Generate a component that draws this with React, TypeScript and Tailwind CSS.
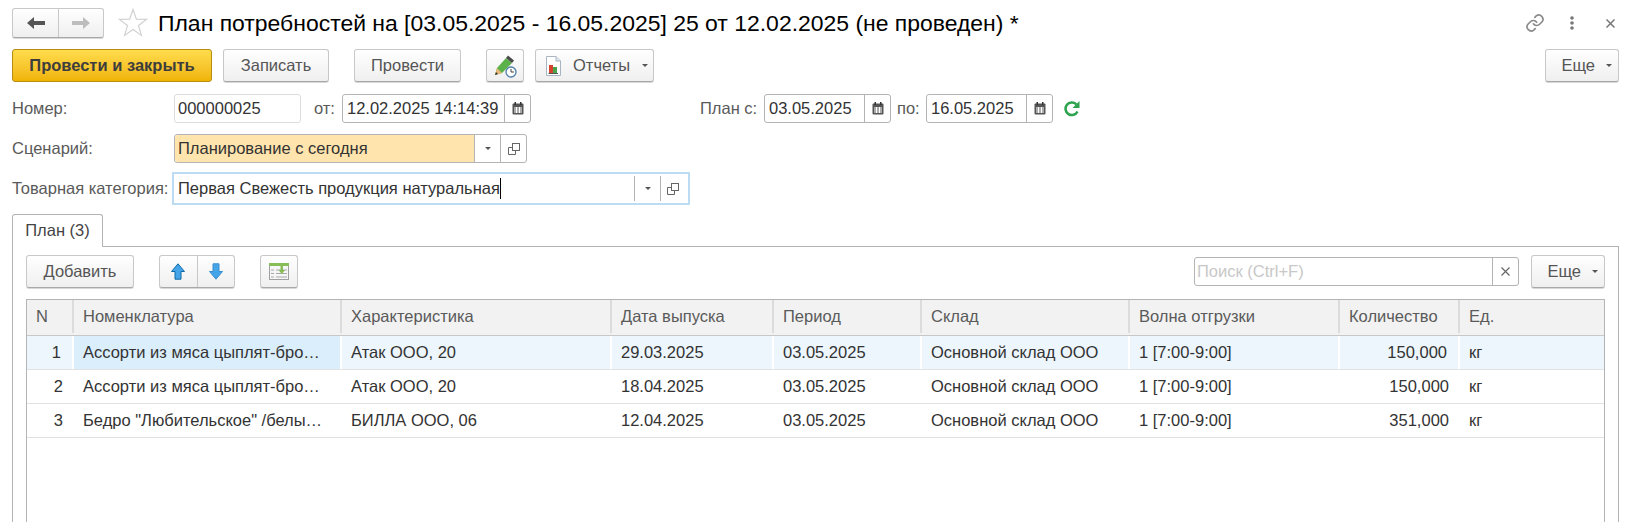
import type { ReactNode } from 'react';

const columns = 'grid grid-cols-[47px_268px_270px_162px_148px_208px_210px_120px_1fr]';

const headers = ['N', 'Номенклатура', 'Характеристика', 'Дата выпуска', 'Период', 'Склад', 'Волна отгрузки', 'Количество', 'Ед.'];

const rows = [
  ['1', 'Ассорти из мяса цыплят-бро…', 'Атак ООО, 20', '29.03.2025', '03.05.2025', 'Основной склад ООО', '1 [7:00-9:00]', '150,000', 'кг'],
  ['2', 'Ассорти из мяса цыплят-бро…', 'Атак ООО, 20', '18.04.2025', '03.05.2025', 'Основной склад ООО', '1 [7:00-9:00]', '150,000', 'кг'],
  ['3', 'Бедро "Любительское" /белы…', 'БИЛЛА ООО, 06', '12.04.2025', '03.05.2025', 'Основной склад ООО', '1 [7:00-9:00]', '351,000', 'кг'],
];

function Caret() {
  return <span className="inline-block h-0 w-0 border-x-[3px] border-t-[3px] border-x-transparent border-t-[#555]" />;
}

function Btn({ className, children }: { className: string; children: ReactNode }) {
  return (
    <div className={`flex h-[33px] shrink-0 items-center justify-center rounded-[3px] border border-[#c8c8c8] border-b-[#a8a8a8] bg-linear-to-b from-white to-[#efefef] text-[#555] shadow-[0_1px_0_#d8d8d8] ${className}`}>
      {children}
    </div>
  );
}

function MoreBtn({ className }: { className: string }) {
  return (
    <Btn className={`w-[74px] justify-end! gap-[11px] pr-[6px] ${className}`}>
      <span>Еще</span>
      <Caret />
    </Btn>
  );
}

function CalendarIcon() {
  return (
    <svg width="12" height="13" viewBox="0 0 12 13">
      <rect x="0.5" y="1.5" width="11" height="11" rx="1" fill="#555" />
      <rect x="2.5" y="0" width="1.5" height="3" fill="#333" />
      <rect x="8" y="0" width="1.5" height="3" fill="#333" />
      <rect x="2" y="5" width="8" height="6" fill="#fff" />
      <path d="M2 6h2M5 6h2M8 6h2M2 8h2M5 8h2M8 8h2M2 10h2M5 10h2M8 10h2" stroke="#555" strokeWidth="1" />
    </svg>
  );
}

function OpenIcon() {
  return (
    <svg width="12" height="12" viewBox="0 0 12 12" fill="none" stroke="#666">
      <rect x="4.5" y="0.5" width="7" height="7" fill="#fff" />
      <path d="M4.5 4.5H0.5V11.5H7.5V7.5" />
    </svg>
  );
}

function DateField({ value, width, className = '' }: { value: string; width: string; className?: string }) {
  return (
    <div className={`flex h-[29px] items-center rounded-[3px] border border-[#b4b4b4] bg-white text-[#333] ${width} ${className}`}>
      <span className="flex-1 pl-[4px]">{value}</span>
      <span className="flex h-full w-[26px] items-center justify-center border-l border-[#b4b4b4]">
        <CalendarIcon />
      </span>
    </div>
  );
}

function Star() {
  return (
    <svg width="30" height="30" viewBox="0 0 30 30" className="ml-[14px] shrink-0">
      <path d="M15 1.5l3.4 9.6 10.2.3-8.1 6.2 2.9 9.8L15 21.6l-8.4 5.8 2.9-9.8-8.1-6.2 10.2-.3z" fill="#fff" stroke="#d0d0d0" strokeWidth="1.2" />
    </svg>
  );
}

function NavArrow({ color, flip }: { color: string; flip?: boolean }) {
  return (
    <svg width="18" height="14" viewBox="0 0 18 14" className={flip ? '-scale-x-100' : ''}>
      <path d="M0 7l7-6v4h11v4H7v4z" fill={color} />
    </svg>
  );
}

function PenIcon() {
  return (
    <svg width="24" height="24" viewBox="0 0 24 24">
      <path d="M2 21l2-7L13 4l6 5-10 10z" fill="#5cb24a" />
      <path d="M13 4l2-2.500 6 5-2 2.500z" fill="#4a4a4a" />
      <path d="M2 21l2-7 5 5z" fill="#e8b878" />
      <path d="M2 21l1-3 2 2z" fill="#333" />
      <circle cx="18" cy="18" r="5" fill="#fff" stroke="#4d7ea8" strokeWidth="1.300" />
      <path d="M18 15v3h3" fill="none" stroke="#444" strokeWidth="1" />
    </svg>
  );
}

function ReportIcon() {
  return (
    <svg width="15" height="20" viewBox="0 0 15 20">
      <path d="M0.500 0.500H10L14.500 5V19.500H0.500z" fill="#fff" stroke="#aab4c0" />
      <path d="M10 0.500V5H14.500" fill="#dfe5ec" stroke="#aab4c0" />
      <rect x="3" y="9" width="4" height="8" fill="#d8432f" />
      <rect x="7" y="11" width="4" height="6" fill="#4aa34a" />
      <path d="M2.500 17.500H12" stroke="#555" strokeWidth="1" />
    </svg>
  );
}

function BlueArrow({ down }: { down?: boolean }) {
  return (
    <svg width="14" height="17" viewBox="0 0 14 17" className={down ? 'rotate-180' : ''}>
      <path d="M7 0.800L13.500 8.500H10V16.200H4V8.500H0.500z" fill="#45a5e8" stroke={down ? '#3b8fd0' : '#0f6aa8'} strokeWidth="1" />
    </svg>
  );
}

function FillIcon() {
  return (
    <svg width="20" height="17" viewBox="0 0 20 17">
      <rect x="0.500" y="0.500" width="19" height="16" fill="#f6f6f6" stroke="#a0a0a0" />
      <rect x="0" y="0" width="20" height="3" fill="#86bd56" />
      <path d="M2 7h3M2 10.500h3M2 14h3M7 7h11M7 10.500h11M7 14h11" stroke="#a8a8a8" strokeWidth="1" />
      <path d="M11.500 3h2.500v4h2l-3.200 4-3.300-4h2z" fill="#86bd56" />
    </svg>
  );
}

function GreenRefresh() {
  return (
    <svg width="18" height="18" viewBox="0 0 18 18" className="ml-[10px]" fill="none">
      <path d="M14.500 11.500A6.300 6.300 0 1 1 13.300 4.300" stroke="#2ea44f" strokeWidth="2.600" />
      <path d="M16.500 1v7h-7z" fill="#2ea44f" />
    </svg>
  );
}

function LinkIcon() {
  return (
    <svg width="20" height="20" viewBox="0 0 24 24" fill="none" stroke="#8a8a8a" strokeWidth="2" strokeLinecap="round" strokeLinejoin="round">
      <path d="M10 13a5 5 0 0 0 7.500.500l3-3a5 5 0 0 0-7-7l-1.700 1.700" />
      <path d="M14 11a5 5 0 0 0-7.500-.500l-3 3a5 5 0 0 0 7 7l1.700-1.700" />
    </svg>
  );
}

export default function App() {
  return (
    <div className="flex h-[522px] w-[1644px] flex-col overflow-hidden bg-white pr-[25px] pl-3 font-['Liberation_Sans',Arial,sans-serif] text-[16.5px] leading-none">
      {/* заголовок */}
      <div className="mt-2 flex h-[30px] items-center">
        <div className="flex h-[30px] w-[92px] shrink-0 items-center rounded-[3px] border border-[#c8c8c8] border-b-[#a8a8a8] bg-linear-to-b from-white to-[#efefef] shadow-[0_1px_0_#d8d8d8]">
          <span className="flex h-full w-[46px] items-center justify-center border-r border-[#c8c8c8]">
            <NavArrow color="#555" />
          </span>
          <span className="flex h-full flex-1 items-center justify-center">
            <NavArrow color="#bdbdbd" flip />
          </span>
        </div>
        <Star />
        <h1 className="ml-[10px] text-[22.95px] font-normal whitespace-nowrap text-black">
          План потребностей на [03.05.2025 - 16.05.2025] 25 от 12.02.2025 (не проведен) *
        </h1>
        <div className="ml-auto flex items-center">
          <LinkIcon />
          <svg width="4" height="14" viewBox="0 0 4 14" className="ml-[25px]" fill="#777">
            <circle cx="2" cy="2" r="1.800" />
            <circle cx="2" cy="7" r="1.800" />
            <circle cx="2" cy="12" r="1.800" />
          </svg>
          <svg width="9" height="9" viewBox="0 0 9 9" className="mr-[4px] ml-[32px]" stroke="#777" strokeWidth="1.500">
            <path d="M0.500 0.500l8 8M8.500 0.500l-8 8" />
          </svg>
        </div>
      </div>

      {/* командная панель */}
      <div className="mt-[11px] flex items-center">
        <div className="flex h-[33px] w-[200px] items-center justify-center rounded-[3px] border border-[#b58d10] bg-linear-to-b from-[#ffdc4a] to-[#f0b400] font-bold text-[#3d3d3d]">
          Провести и закрыть
        </div>
        <Btn className="ml-[11px] w-[106px]">Записать</Btn>
        <Btn className="ml-[25px] w-[107px]">Провести</Btn>
        <Btn className="ml-[25px] w-[38px]"><PenIcon /></Btn>
        <Btn className="ml-[11px] w-[119px] justify-start! gap-[12px] pl-[10px]">
          <ReportIcon />
          <span>Отчеты</span>
          <Caret />
        </Btn>
        <MoreBtn className="ml-auto" />
      </div>

      {/* реквизиты */}
      <div className="mt-3 flex h-[29px] items-center text-[#5a5a5a]">
        <span className="w-[162px]">Номер:</span>
        <div className="flex h-[29px] w-[127px] items-center rounded-[3px] border border-[#dcdcdc] pl-[3px] text-[#333]">000000025</div>
        <span className="ml-[13px] w-[28px]">от:</span>
        <DateField value="12.02.2025 14:14:39" width="w-[189px]" />
        <span className="ml-[169px] w-[64px]">План с:</span>
        <DateField value="03.05.2025" width="w-[127px]" />
        <span className="ml-[6px] w-[29px]">по:</span>
        <DateField value="16.05.2025" width="w-[127px]" />
        <GreenRefresh />
      </div>

      <div className="mt-[11px] flex h-[29px] items-center text-[#5a5a5a]">
        <span className="w-[162px]">Сценарий:</span>
        <div className="flex h-[29px] w-[353px] items-center rounded-[3px] border border-[#b4b4b4] text-[#333]">
          <span className="flex h-full flex-1 items-center rounded-l-[3px] bg-[#ffe4ad] pl-[3px]">Планирование с сегодня</span>
          <span className="flex h-full w-[26px] items-center justify-center border-l border-[#b4b4b4]"><Caret /></span>
          <span className="flex h-full w-[26px] items-center justify-center border-l border-[#b4b4b4]"><OpenIcon /></span>
        </div>
      </div>

      <div className="mt-[9px] flex h-[33px] items-center text-[#5a5a5a]">
        <span className="w-[160px] whitespace-nowrap">Товарная категория:</span>
        <div className="flex h-[33px] w-[518px] items-center border-2 border-[#bcdcf4] text-[#333]">
          <span className="flex flex-1 items-center pl-[4px]">
            Первая Свежесть продукция натуральная
            <span className="h-[21px] w-px bg-black" />
          </span>
          <span className="flex h-[25px] w-[26px] items-center justify-center border-l border-[#b4b4b4]"><Caret /></span>
          <span className="flex h-[25px] w-[28px] items-center justify-center border-l border-[#b4b4b4] pr-[3px]"><OpenIcon /></span>
        </div>
      </div>

      {/* закладка */}
      <div className="mt-[9px] -mb-px flex">
        <div className="z-10 flex h-[33px] w-[91px] items-center justify-center rounded-t-[3px] border border-b-0 border-[#b4b4b4] bg-white pb-[2px] text-[#444]">
          План (3)
        </div>
      </div>
      <div className="flex-1 border border-b-0 border-[#b4b4b4] px-[13px] pt-2">
        <div className="flex h-[33px] items-center">
          <Btn className="w-[108px]">Добавить</Btn>
          <div className="ml-[25px] flex h-[33px] w-[76px] rounded-[3px] border border-[#c8c8c8] border-b-[#a8a8a8] bg-linear-to-b from-white to-[#efefef] shadow-[0_1px_0_#d8d8d8]">
            <span className="flex flex-1 items-center justify-center border-r border-[#c8c8c8]"><BlueArrow /></span>
            <span className="flex flex-1 items-center justify-center"><BlueArrow down /></span>
          </div>
          <Btn className="ml-[25px] w-[38px]"><FillIcon /></Btn>
          <div className="ml-auto flex h-[29px] w-[325px] items-center rounded-[3px] border border-[#b4b4b4]">
            <span className="flex-1 pl-[2px] text-[#c8c8c8]">Поиск (Ctrl+F)</span>
            <span className="flex h-full w-[26px] items-center justify-center border-l border-[#b4b4b4]">
              <svg width="9" height="9" viewBox="0 0 9 9" stroke="#666" strokeWidth="1.200">
                <path d="M0.500 0.500l8 8M8.500 0.500l-8 8" />
              </svg>
            </span>
          </div>
          <MoreBtn className="ml-3" />
        </div>

        {/* таблица */}
        <div className="mt-[11px] h-[300px] border border-b-0 border-[#b4b4b4]">
          <div className={`${columns} h-[36px] border-b border-[#c8c8c8] bg-[#f2f2f2] pb-[2px] text-[#5a5a5a]`}>
            {headers.map((title, i) => (
              <div key={title} className={`flex items-center pr-[9px] pl-[9px] ${i < headers.length - 1 ? 'border-r-2 border-[#dcdcdc]' : ''}`}>
                {title}
              </div>
            ))}
          </div>
          {rows.map((row, rowIndex) => (
            <div key={row[0]} className={`${columns} h-[34px] border-b border-[#e2e2e2] text-[#333] ${rowIndex === 0 ? 'bg-[#edf6fd]' : ''}`}>
              {row.map((cell, i) => (
                <div
                  key={i}
                  className={`flex items-center whitespace-nowrap ${i === 0 || i === 7 ? 'justify-end' : ''} ${i === 0 ? 'pr-[11px]' : 'px-[9px]'} ${i === 7 ? 'pr-[11px]' : ''} ${rowIndex === 0 && i === 1 ? 'bg-[#dbeefc]' : ''} ${rowIndex === 0 && i < 8 ? 'border-r-2 border-white' : ''}`}
                >
                  {cell}
                </div>
              ))}
            </div>
          ))}
        </div>
      </div>
    </div>
  );
}
